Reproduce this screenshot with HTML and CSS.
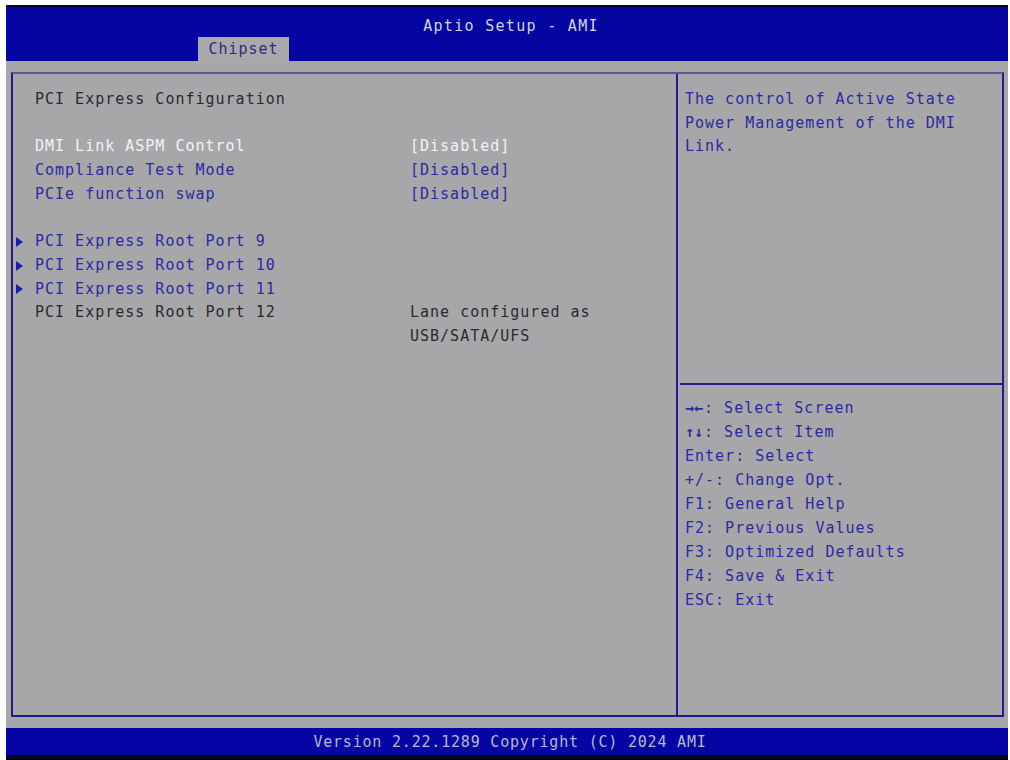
FILE: index.html
```html
<!DOCTYPE html>
<html>
<head>
<meta charset="utf-8">
<title>Aptio Setup - AMI</title>
<link rel="stylesheet" href="styles.css">
</head>
<body>
<div class="screen">
  <header class="topbar">
    <div class="title">Aptio Setup - AMI</div>
    <div class="tabs"><span class="tab">Chipset</span></div>
  </header>
  <main class="frame">
    <section class="left">
      <div class="line head">PCI Express Configuration</div>
      <div class="group">
        <div class="row"><span class="mark"></span><span class="label sel">DMI Link ASPM Control</span><span class="value sel">[Disabled]</span></div>
        <div class="row"><span class="mark"></span><span class="label blue">Compliance Test Mode</span><span class="value blue">[Disabled]</span></div>
        <div class="row"><span class="mark"></span><span class="label blue">PCIe function swap</span><span class="value blue">[Disabled]</span></div>
      </div>
      <div class="group">
        <div class="row"><span class="mark"><span class="tri"></span></span><span class="label blue">PCI Express Root Port 9</span><span class="value"></span></div>
        <div class="row"><span class="mark"><span class="tri"></span></span><span class="label blue">PCI Express Root Port 10</span><span class="value"></span></div>
        <div class="row"><span class="mark"><span class="tri"></span></span><span class="label blue">PCI Express Root Port 11</span><span class="value"></span></div>
        <div class="row"><span class="mark"></span><span class="label dark">PCI Express Root Port 12</span><span class="value dark">Lane configured as<br>USB/SATA/UFS</span></div>
      </div>
    </section>
    <aside class="right">
      <div class="help">The control of Active State<br>Power Management of the DMI<br>Link.</div>
      <div class="rule"></div>
      <div class="keys">
        <div><span class="arw">&rarr;&larr;</span>: Select Screen</div>
        <div><span class="arw">&uarr;&darr;</span>: Select Item</div>
        <div>Enter: Select</div>
        <div>+/-: Change Opt.</div>
        <div>F1: General Help</div>
        <div>F2: Previous Values</div>
        <div>F3: Optimized Defaults</div>
        <div>F4: Save &amp; Exit</div>
        <div>ESC: Exit</div>
      </div>
    </aside>
  </main>
  <footer class="bottombar">Version 2.22.1289 Copyright (C) 2024 AMI</footer>
</div>
</body>
</html>
```

FILE: styles.css
```css
html, body {
  margin: 0;
  padding: 0;
  background: #ffffff;
}
body {
  width: 1010px;
  height: 760px;
  overflow: hidden;
  font-family: "DejaVu Sans Mono", "Liberation Mono", monospace;
  font-size: 15px;
  letter-spacing: 1px;
}
.screen {
  margin: 5px 2px 0 6px;
  height: 755px;
  background: #a7a7a9;
  display: flex;
  flex-direction: column;
}
.topbar {
  height: 54px;
  border-top: 2px solid #05052a;
  background: #0505a2;
  display: flex;
  flex-direction: column;
  align-items: stretch;
}
.title {
  height: 30px;
  line-height: 30px;
  text-align: center;
  color: #d4d4e0;
  padding-left: 8px;
  padding-top: 4px;
  box-sizing: border-box;
  letter-spacing: 1.3px;
}
.tabs {
  flex: 1;
  display: flex;
  align-items: flex-end;
  padding-left: 192px;
}
.tab {
  width: 91px;
  height: 24px;
  line-height: 25px;
  background: #a9a9ab;
  color: #2c2c7a;
  text-align: center;
}
.frame {
  margin: 11px 4px 0 5px;
  height: 645px;
  box-sizing: border-box;
  border: 2px solid #1c1c8c;
  border-top-color: #5a5a8e;
  display: grid;
  grid-template-columns: 663px 1fr;
}
.left {
  padding: 14px 0 0 0;
  line-height: 23.7px;
}
.head {
  padding-left: 22px;
  color: #2a2a2e;
}
.group {
  margin-top: 23.7px;
}
.row {
  display: grid;
  grid-template-columns: 22px 375px 1fr;
}
.mark {
  display: flex;
  align-items: center;
  padding-left: 3px;
}
.tri {
  width: 0;
  height: 0;
  border-top: 5px solid transparent;
  border-bottom: 5px solid transparent;
  border-left: 7px solid #1e1eae;
}
.sel { color: #f2f2f6; }
.blue { color: #2a2aa2; }
.dark { color: #2a2a2e; }
.right {
  border-left: 2px solid #1c1c8c;
  display: flex;
  flex-direction: column;
}
.help {
  height: 309px;
  box-sizing: border-box;
  padding: 14px 0 0 7px;
  line-height: 23.7px;
  color: #2a2aa2;
}
.rule {
  height: 2px;
  margin: 0 0 0 2px;
  background: #1c1c8c;
}
.keys {
  padding: 11px 0 0 7px;
  line-height: 24px;
  color: #2a2aa2;
}
.arw {
  font-weight: bold;
  letter-spacing: 0;
  padding-right: 1px;
}
.bottombar {
  margin-top: 11px;
  height: 27px;
  line-height: 29px;
  background: #0505a6;
  border-bottom: 5px solid #05051a;
  text-align: center;
  color: #b8b8cc;
  font-size: 15px;
  letter-spacing: 0.8px;
  padding-left: 6px;
}
```
